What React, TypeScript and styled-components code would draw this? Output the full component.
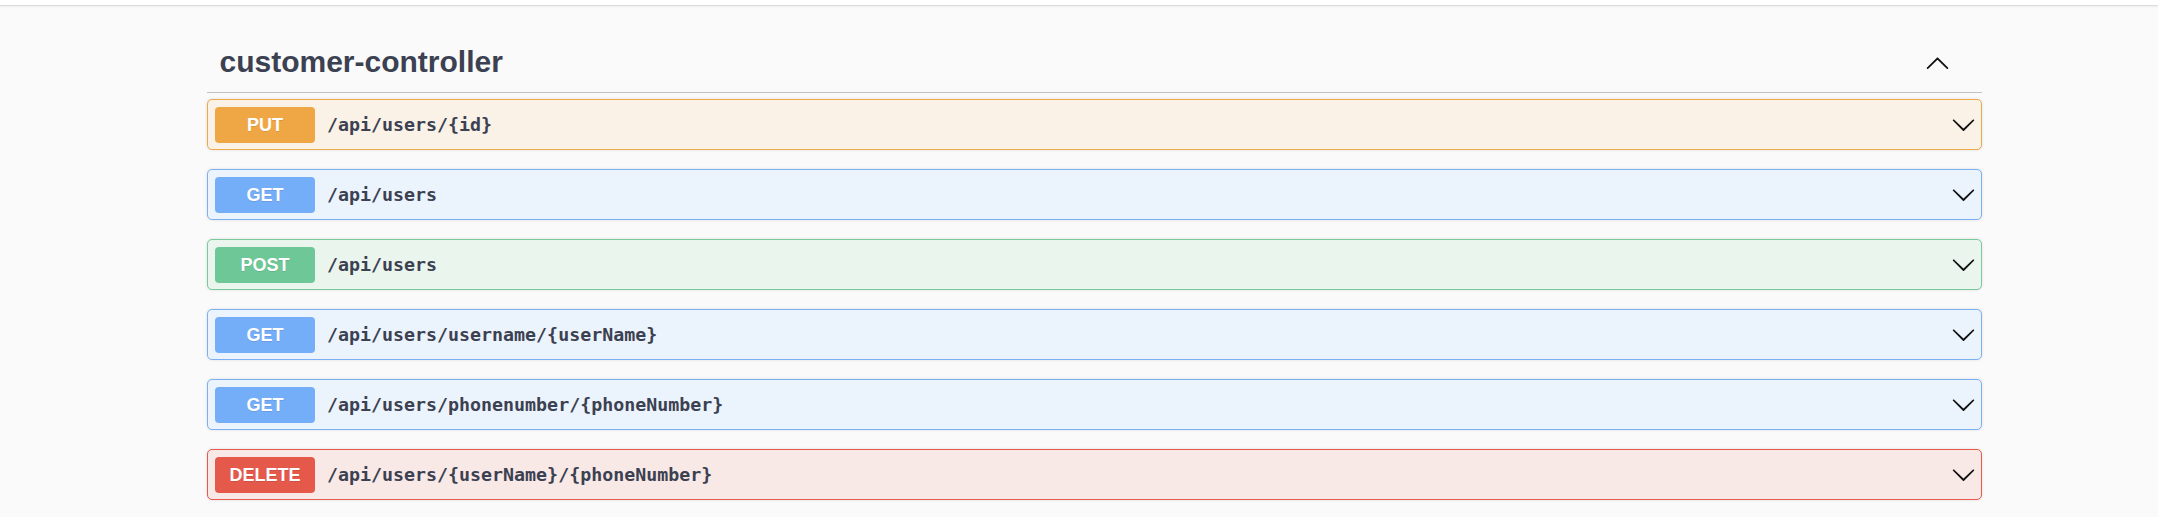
import React from 'react';
import styled, { createGlobalStyle } from 'styled-components';

const GlobalStyle = createGlobalStyle`
  html, body { margin: 0; padding: 0; background: #fafafa; }
  body { font-family: "Liberation Sans", Arial, sans-serif; }
`;

type Method = 'PUT' | 'GET' | 'POST' | 'DELETE';

const palette: Record<Method, { badge: string; border: string; bg: string }> = {
  PUT: { badge: '#efa746', border: '#efa84a', bg: '#faf1e7' },
  GET: { badge: '#74adf8', border: '#7cb0f4', bg: '#ebf3fc' },
  POST: { badge: '#6ec796', border: '#78c99b', bg: '#eaf5ee' },
  DELETE: { badge: '#e5594b', border: '#e8594b', bg: '#f8e8e6' },
};

const TopBar = styled.div`
  height: 5px;
  background: #ffffff;
  border-bottom: 1px solid #dcdcdc;
  box-shadow: 0 1px 2px rgba(0, 0, 0, 0.05);
`;

const Page = styled.main`
  padding: 27px 0 0 207px;
`;

const Section = styled.section`
  width: 1775px;
`;

const TagHeader = styled.div`
  display: flex;
  align-items: center;
  justify-content: space-between;
  padding: 12px 32px 12.5px 12.5px;
  border-bottom: 1px solid rgba(59, 65, 81, 0.3);
  margin-bottom: 6px;
`;

const Title = styled.h3`
  margin: 0;
  font: 700 30px/34.5px "Liberation Sans", Arial, sans-serif;
  color: #3b4151;
`;

const IconButton = styled.button`
  display: flex;
  align-items: center;
  justify-content: center;
  width: 25px;
  height: 25px;
  padding: 0;
  border: none;
  background: transparent;
  cursor: pointer;
`;

const Op = styled.div<{ $m: Method }>`
  display: flex;
  align-items: center;
  box-sizing: border-box;
  height: 51px;
  margin-bottom: 19px;
  padding: 0 5px 0 7px;
  border: 1px solid ${(p) => palette[p.$m].border};
  border-radius: 5px;
  background: ${(p) => palette[p.$m].bg};
  box-shadow: 0 0 3px rgba(0, 0, 0, 0.12);
`;

const Badge = styled.span<{ $m: Method }>`
  flex: none;
  width: 100px;
  height: 36px;
  border-radius: 4px;
  background: ${(p) => palette[p.$m].badge};
  color: #ffffff;
  text-align: center;
  font: 700 18px/36px "Liberation Sans", Arial, sans-serif;
  text-shadow: 0 1px 0 rgba(0, 0, 0, 0.1);
`;

const Path = styled.span`
  flex: 1;
  padding: 0 12px;
  font: 700 18.3px/24px "DejaVu Sans Mono", "Liberation Mono", monospace;
  color: #3b4151;
`;

const Chevron = ({ up }: { up?: boolean }) => (
  <svg width="25" height="25" viewBox="0 0 20 20" aria-hidden="true">
    {up ? (
      <path d="M17.418 14.908c.272.268.709.268.979 0s.271-.701 0-.969l-7.908-7.83c-.27-.268-.707-.268-.979 0l-7.908 7.83c-.27.268-.27.701 0 .969.271.268.709.268.979 0L10 7.767l7.418 7.141z" fill="#111" />
    ) : (
      <path d="M17.418 6.109c.272-.268.709-.268.979 0s.271.701 0 .969l-7.908 7.83c-.27.268-.707.268-.979 0l-7.908-7.83c-.27-.268-.27-.701 0-.969.271-.268.709-.268.979 0L10 13.25l7.418-7.141z" fill="#111" />
    )}
  </svg>
);

const ops: { m: Method; path: string }[] = [
  { m: 'PUT', path: '/api/users/{id}' },
  { m: 'GET', path: '/api/users' },
  { m: 'POST', path: '/api/users' },
  { m: 'GET', path: '/api/users/username/{userName}' },
  { m: 'GET', path: '/api/users/phonenumber/{phoneNumber}' },
  { m: 'DELETE', path: '/api/users/{userName}/{phoneNumber}' },
];

export default function App() {
  return (
    <>
      <GlobalStyle />
      <TopBar />
      <Page>
        <Section>
          <TagHeader>
            <Title>customer-controller</Title>
            <IconButton aria-label="collapse">
              <Chevron up />
            </IconButton>
          </TagHeader>
          {ops.map((o, i) => (
            <Op key={i} $m={o.m}>
              <Badge $m={o.m}>{o.m}</Badge>
              <Path>{o.path}</Path>
              <IconButton aria-label="expand">
                <Chevron />
              </IconButton>
            </Op>
          ))}
        </Section>
      </Page>
    </>
  );
}
